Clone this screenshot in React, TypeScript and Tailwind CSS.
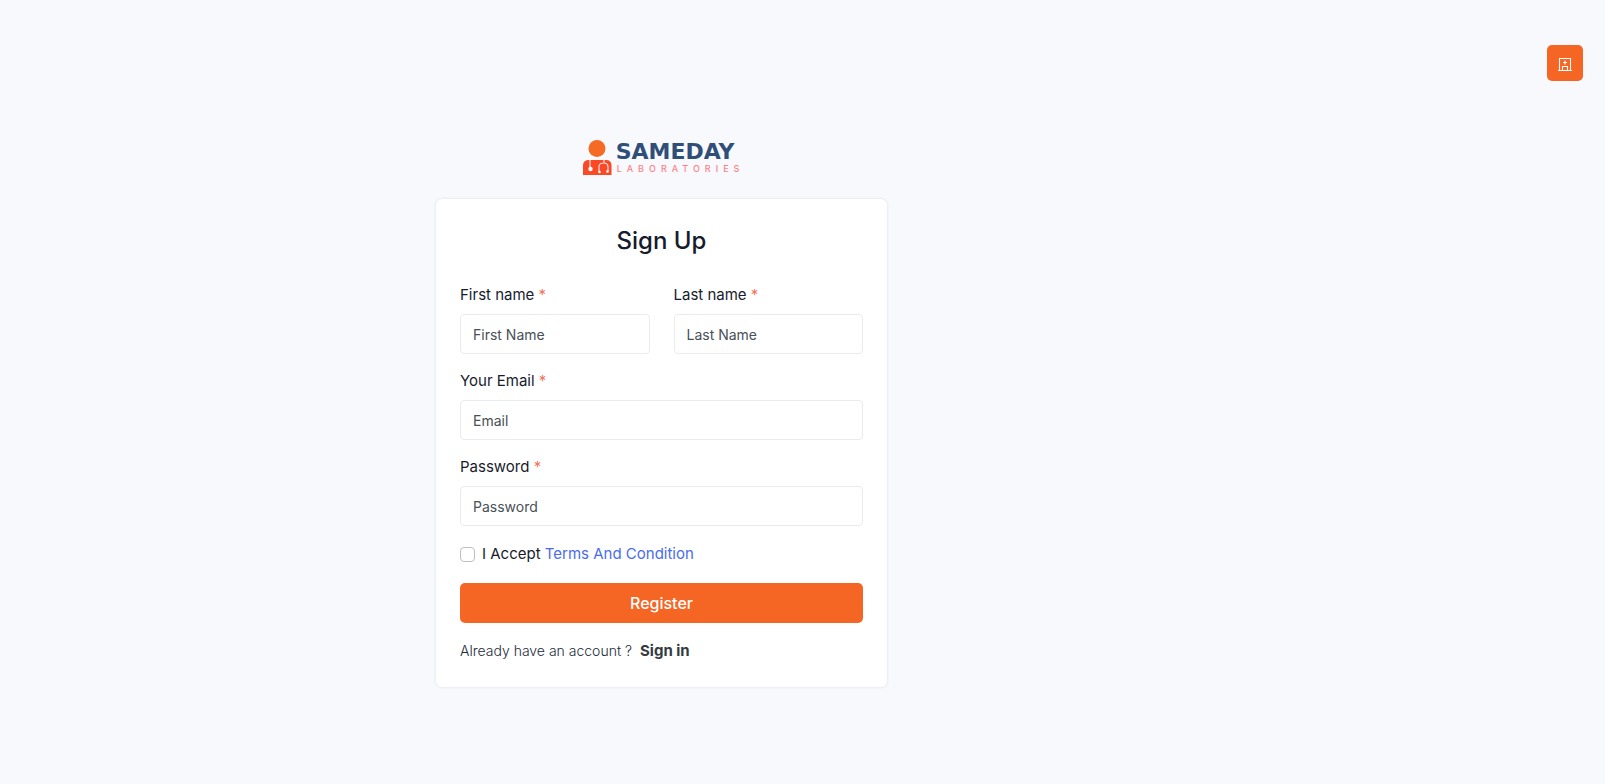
import type { InputHTMLAttributes } from "react";

function Logo() {
  return (
    <a href="#home" aria-label="Sameday Laboratories" className="flex h-9 items-start gap-1 pl-1">
      <svg width="29" height="36" viewBox="0 0 29 36" aria-hidden="true">
        <circle cx="14" cy="8.5" r="8.5" fill="#f56a24" />
        <path d="M0 35V25.500Q0 20 6 20H23Q28.500 20 28.500 25.500V35Z" fill="#fb4926" />
        <g fill="none" stroke="#fff" strokeOpacity="0.85" strokeWidth="1.2">
          <path d="M7 20V29" />
          <path d="M21 20V23M16 32V27Q16 23 20.500 23Q25 23 25 27V31" />
        </g>
        <circle cx="7.500" cy="29" r="2.200" fill="#fff" />
        <circle cx="16.500" cy="32" r="1.300" fill="#fff" />
        <circle cx="24.500" cy="31.500" r="1.300" fill="#fff" />
      </svg>
      <span className="flex flex-col">
        <span className="font-['DejaVu_Sans',sans-serif] text-[22px] leading-[24px] font-bold text-[#2f4f78]">
          SAMEDAY
        </span>
        <span className="pl-px text-[9px] leading-[10px] font-medium tracking-[5px] text-[#ff8286]">
          LABORATORIES
        </span>
      </span>
    </a>
  );
}

function HospitalIcon() {
  return (
    <svg width="14" height="16" viewBox="0 0 14 16" fill="none" stroke="#fff" strokeWidth="1.100" aria-hidden="true">
      <path d="M0 15.500H14M1.500 15.500V3.500H12.500V15.500" />
      <path d="M7 5.500V9.500M5 7.500H9" />
      <path d="M4.500 15.500V11.500H9.500V15.500" />
    </svg>
  );
}

type FieldProps = InputHTMLAttributes<HTMLInputElement> & { id: string; label: string };

function Field({ id, label, ...rest }: FieldProps) {
  return (
    <div className="mb-4 flex min-w-0 flex-1 flex-col gap-2">
      <label htmlFor={id} className="text-[15px] leading-[22px] text-[#161c2d]">
        {label} <span className="text-[#f0735a]">*</span>
      </label>
      <input
        id={id}
        className="h-10 w-full rounded border border-[#e9ecef] bg-white px-3 text-sm text-[#161c2d] outline-none placeholder:text-[#495057] focus:border-[#f56624]"
        {...rest}
      />
    </div>
  );
}

export default function App() {
  return (
    <div className="relative min-h-screen bg-[#f8f9fd] font-['Inter',sans-serif] text-[#161c2d]">
      <button
        type="button"
        aria-label="Laboratory"
        className="absolute top-[45px] right-[22px] flex size-9 items-center justify-center rounded-[5px] bg-[#f56624]"
      >
        <HospitalIcon />
      </button>
      <main className="flex max-w-[1323px] flex-col items-center px-4 pt-[140px] pb-12">
        <Logo />
        <form className="mt-[23px] w-full max-w-[451px] rounded-md bg-white p-6 shadow-[0_0_3px_rgba(60,72,88,0.15)]">
          <h1 className="mb-[25px] text-center text-2xl leading-9 font-medium">Sign Up</h1>
          <div className="flex gap-6">
            <Field id="first" label="First name" type="text" placeholder="First Name" />
            <Field id="last" label="Last name" type="text" placeholder="Last Name" />
          </div>
          <Field id="email" label="Your Email" type="email" placeholder="Email" />
          <Field id="password" label="Password" type="password" placeholder="Password" />
          <div className="mb-[17px] flex items-center gap-[7px] text-[15px] leading-6">
            <input
              id="terms"
              type="checkbox"
              className="size-[15px] appearance-none rounded border border-[#bfbfbf] bg-white checked:bg-[#f56624]"
            />
            <label htmlFor="terms">
              I Accept{" "}
              <a href="#terms" className="text-[#4a6cf0]">
                Terms And Condition
              </a>
            </label>
          </div>
          <button type="submit" className="h-10 w-full rounded-[5px] bg-[#f56624] text-base font-medium text-white">
            Register
          </button>
          <p className="mt-4 flex items-center gap-2 text-sm leading-6">
            <span className="font-light text-[#212b38]">Already have an account ?</span>
            <a href="#signin" className="text-[15px] font-bold text-[#343a40]">
              Sign in
            </a>
          </p>
        </form>
      </main>
    </div>
  );
}
